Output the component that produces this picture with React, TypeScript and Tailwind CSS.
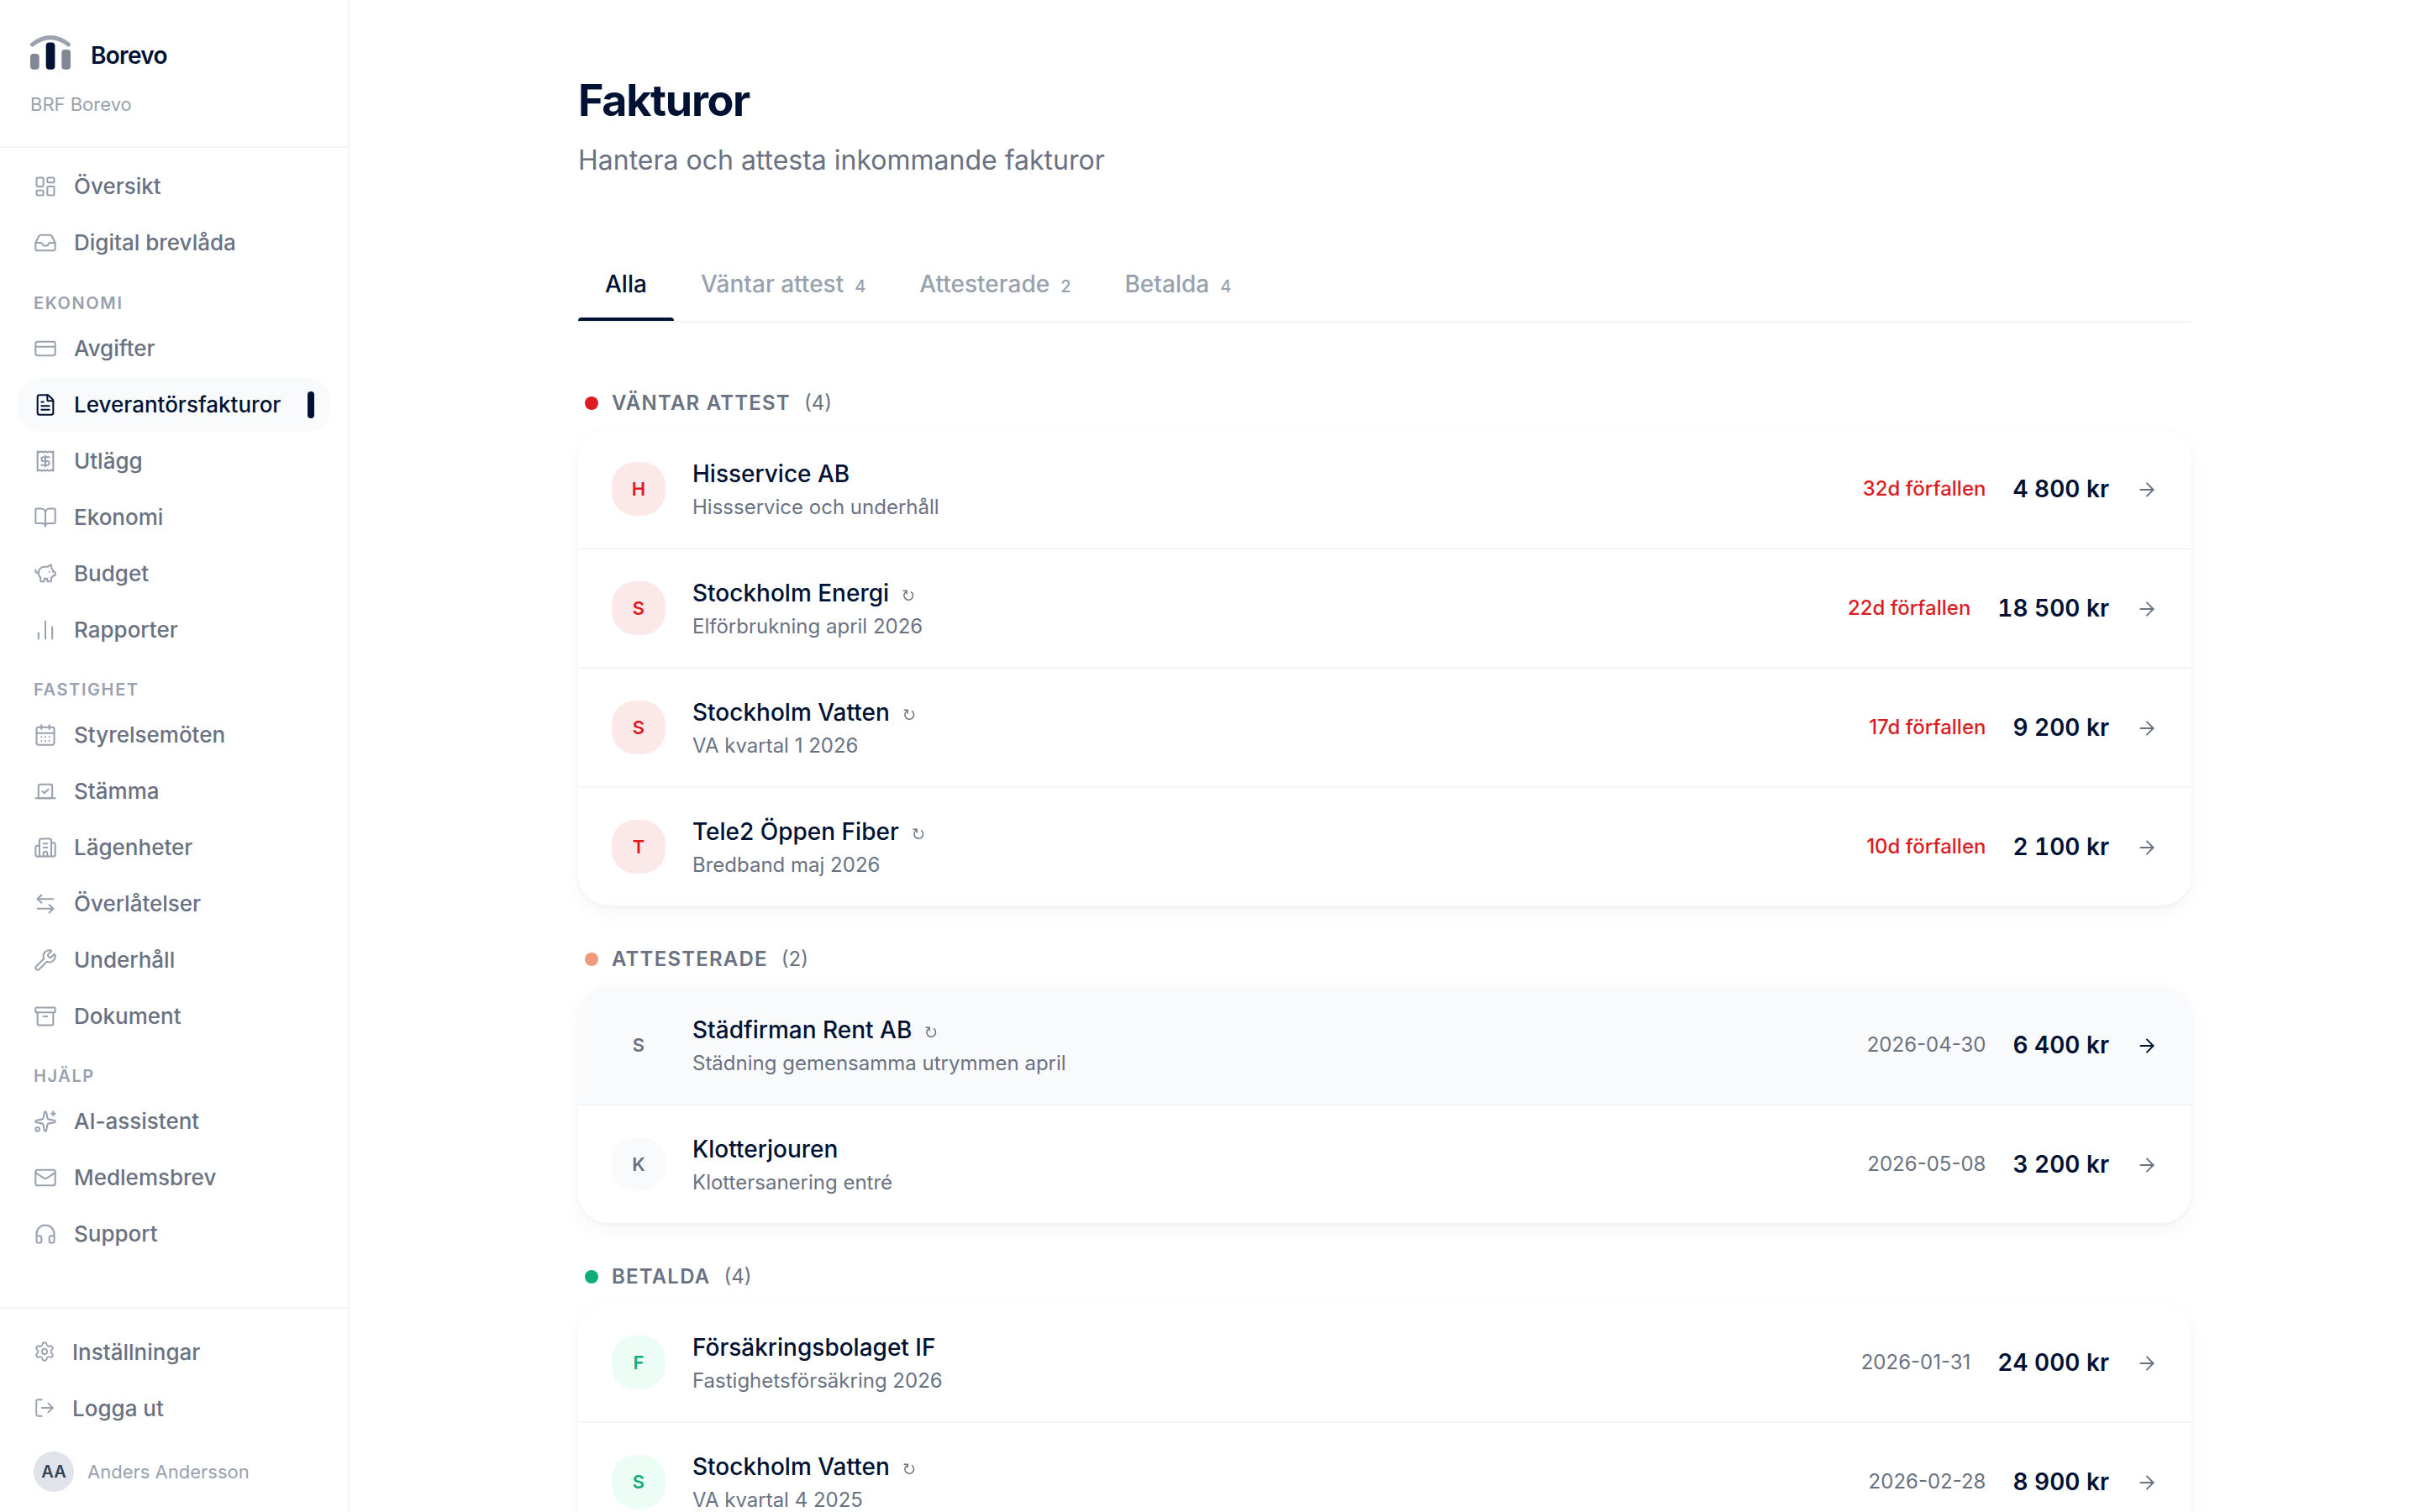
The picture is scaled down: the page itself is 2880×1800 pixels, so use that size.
import type { ReactNode } from 'react';
import {
  Archive,
  ArrowLeftRight,
  ArrowRight,
  BookOpen,
  Building2,
  CalendarDays,
  ChartNoAxesColumn,
  CreditCard,
  FileText,
  Headphones,
  Inbox,
  LayoutDashboard,
  LogOut,
  Mail,
  PiggyBank,
  Settings,
  Sparkles,
  Vote,
  Wrench,
} from 'lucide-react';
import type { LucideIcon } from 'lucide-react';
import clsx from 'clsx';

type Status = 'pending' | 'approved' | 'paid';

interface Invoice {
  supplier: string;
  description: string;
  amount: string;
  due: string;
  overdue?: boolean;
  recurring?: boolean;
  highlighted?: boolean;
}

interface NavEntry {
  label: string;
  icon: LucideIcon | typeof ReceiptIcon;
  active?: boolean;
}

function ReceiptIcon({ size = 24, strokeWidth = 2 }: { size?: number | string; strokeWidth?: number | string }) {
  return (
    <svg
      width={size}
      height={size}
      viewBox="0 0 24 24"
      fill="none"
      stroke="currentColor"
      strokeWidth={strokeWidth}
      strokeLinecap="round"
      strokeLinejoin="round"
    >
      <path d="M4 2v20l2-1 2 1 2-1 2 1 2-1 2 1 2-1 2 1V2l-2 1-2-1-2 1-2-1-2 1-2-1-2 1Z" />
      <path d="M16 8h-6a2 2 0 1 0 0 4h4a2 2 0 1 1 0 4H8" />
      <path d="M12 17.5v-11" />
    </svg>
  );
}

const navGroups: { title?: string; items: NavEntry[] }[] = [
  {
    items: [
      { label: 'Översikt', icon: LayoutDashboard },
      { label: 'Digital brevlåda', icon: Inbox },
    ],
  },
  {
    title: 'Ekonomi',
    items: [
      { label: 'Avgifter', icon: CreditCard },
      { label: 'Leverantörsfakturor', icon: FileText, active: true },
      { label: 'Utlägg', icon: ReceiptIcon },
      { label: 'Ekonomi', icon: BookOpen },
      { label: 'Budget', icon: PiggyBank },
      { label: 'Rapporter', icon: ChartNoAxesColumn },
    ],
  },
  {
    title: 'Fastighet',
    items: [
      { label: 'Styrelsemöten', icon: CalendarDays },
      { label: 'Stämma', icon: Vote },
      { label: 'Lägenheter', icon: Building2 },
      { label: 'Överlåtelser', icon: ArrowLeftRight },
      { label: 'Underhåll', icon: Wrench },
      { label: 'Dokument', icon: Archive },
    ],
  },
  {
    title: 'Hjälp',
    items: [
      { label: 'AI-assistent', icon: Sparkles },
      { label: 'Medlemsbrev', icon: Mail },
      { label: 'Support', icon: Headphones },
    ],
  },
];

const tabs: { label: string; count?: number }[] = [
  { label: 'Alla' },
  { label: 'Väntar attest', count: 4 },
  { label: 'Attesterade', count: 2 },
  { label: 'Betalda', count: 4 },
];

const sections: { status: Status; title: string; invoices: Invoice[] }[] = [
  {
    status: 'pending',
    title: 'Väntar attest',
    invoices: [
      { supplier: 'Hisservice AB', description: 'Hissservice och underhåll', amount: '4 800 kr', due: '32d förfallen', overdue: true },
      { supplier: 'Stockholm Energi', description: 'Elförbrukning april 2026', amount: '18 500 kr', due: '22d förfallen', overdue: true, recurring: true },
      { supplier: 'Stockholm Vatten', description: 'VA kvartal 1 2026', amount: '9 200 kr', due: '17d förfallen', overdue: true, recurring: true },
      { supplier: 'Tele2 Öppen Fiber', description: 'Bredband maj 2026', amount: '2 100 kr', due: '10d förfallen', overdue: true, recurring: true },
    ],
  },
  {
    status: 'approved',
    title: 'Attesterade',
    invoices: [
      { supplier: 'Städfirman Rent AB', description: 'Städning gemensamma utrymmen april', amount: '6 400 kr', due: '2026-04-30', recurring: true, highlighted: true },
      { supplier: 'Klotterjouren', description: 'Klottersanering entré', amount: '3 200 kr', due: '2026-05-08' },
    ],
  },
  {
    status: 'paid',
    title: 'Betalda',
    invoices: [
      { supplier: 'Försäkringsbolaget IF', description: 'Fastighetsförsäkring 2026', amount: '24 000 kr', due: '2026-01-31' },
      { supplier: 'Stockholm Vatten', description: 'VA kvartal 4 2025', amount: '8 900 kr', due: '2026-02-28', recurring: true },
    ],
  },
];

// The last group continues below the fold
const groupCount: Record<Status, number> = { pending: 4, approved: 2, paid: 4 };

const dotColor: Record<Status, string> = {
  pending: 'bg-[#dc1c22]',
  approved: 'bg-[#f0997b]',
  paid: 'bg-[#0eae75]',
};

const avatarColor: Record<Status, string> = {
  pending: 'bg-[#fbe8e9] text-[#dc1c22]',
  approved: 'bg-[#f9fafc] text-gray-500',
  paid: 'bg-[#ecfdf5] text-[#0eae75]',
};

function Logo() {
  return (
    <svg width="48" height="42" viewBox="0 0 48 42" fill="none">
      <path d="M2.6 11Q24 -5.6 45.4 11" stroke="#9ca3af" strokeWidth="5.2" strokeLinecap="round" />
      <rect x="0" y="22" width="10.7" height="18.7" rx="4" fill="#808896" />
      <rect x="18.7" y="8.5" width="10.7" height="32.2" rx="4" fill="#001233" />
      <rect x="37.3" y="17" width="10.7" height="23.7" rx="4" fill="#808896" />
    </svg>
  );
}

function RecurringMark() {
  return (
    <svg width="14" height="13" viewBox="0 0 14 13" fill="none" stroke="currentColor" strokeWidth="1.5" className="mt-1 text-gray-500">
      <path d="M10 2.4A5.3 5.3 0 1 1 4.6 2.3" />
      <path d="M0.6 1.2H5.2V5.4" />
    </svg>
  );
}

function NavItem({ label, icon: Icon, active }: NavEntry) {
  return (
    <a
      className={clsx(
        'flex h-16 items-center gap-5 rounded-[28px] px-5 text-[26px] font-medium',
        active ? 'bg-[#f9fafc] text-[#001233]' : 'text-gray-500',
      )}
    >
      <span className={clsx('shrink-0', active ? 'text-[#001233]' : 'text-gray-400')}>
        <Icon size={28} strokeWidth={1.75} />
      </span>
      <span className="flex-1 pb-0.5 whitespace-nowrap">{label}</span>
      {active && <span className="h-8 w-2 rounded-full bg-[#001233]" />}
    </a>
  );
}

function FooterItem({ label, icon }: { label: string; icon: ReactNode }) {
  return (
    <a className="flex h-16 items-center gap-5 px-5 text-[26px] font-medium text-gray-500">
      <span className="text-gray-400">{icon}</span>
      {label}
    </a>
  );
}

function Sidebar() {
  return (
    <aside className="flex w-[416px] shrink-0 flex-col border-r-2 border-gray-100 bg-white">
      <div className="h-44 border-b-2 border-gray-100 px-9 pt-[42px]">
        <div className="flex items-start gap-6">
          <Logo />
          <span className="pt-[7px] text-[28px] leading-[34px] font-semibold tracking-tight text-[#001233]">
            Borevo
          </span>
        </div>
        <p className="mt-[27px] text-[22px] leading-[26px] text-gray-400">BRF Borevo</p>
      </div>

      <nav className="flex flex-col px-5 pt-3.5">
        {navGroups.map((group, i) => (
          <div key={group.title ?? 'main'} className={clsx(i === 0 && 'pb-px')}>
            {group.title && (
              <h2 className="px-5 pt-6 pb-[7px] text-[20px] leading-[30px] font-semibold tracking-[0.08em] text-gray-400 uppercase">
                {group.title}
              </h2>
            )}
            <div className="flex flex-col gap-[3px]">
              {group.items.map((item) => (
                <NavItem key={item.label} {...item} />
              ))}
            </div>
          </div>
        ))}
      </nav>

      <div className="mt-auto border-t-2 border-gray-100 px-5 pt-[19px] pb-6">
        <div className="flex flex-col gap-[3px]">
          <FooterItem label="Inställningar" icon={<Settings size={26} strokeWidth={1.75} />} />
          <FooterItem label="Logga ut" icon={<LogOut size={26} strokeWidth={1.75} />} />
        </div>
        <div className="mt-5 flex items-center gap-4 px-5">
          <div className="flex size-12 items-center justify-center rounded-full bg-[#e0e4e8] text-[20px] font-semibold text-[#334155]">
            AA
          </div>
          <span className="text-[22px] text-gray-400">Anders Andersson</span>
        </div>
      </div>
    </aside>
  );
}

function InvoiceRow({ invoice, status }: { invoice: Invoice; status: Status }) {
  return (
    <div className={clsx('flex h-[142px] items-center px-10 last:h-[140px]', invoice.highlighted && 'bg-[#f9fafc]')}>
      <div
        className={clsx(
          'flex size-16 shrink-0 items-center justify-center rounded-[28px] text-[22px] font-semibold',
          avatarColor[status],
        )}
      >
        {invoice.supplier[0]}
      </div>
      <div className="ml-8 flex-1">
        <div className="flex items-center gap-4">
          <span className="text-[28px] leading-10 font-medium text-[#001233]">{invoice.supplier}</span>
          {invoice.recurring && <RecurringMark />}
        </div>
        <p className="mt-[3px] text-[24px] leading-[33px] text-gray-500">{invoice.description}</p>
      </div>
      <span className={clsx('text-[24px]', invoice.overdue ? 'font-medium text-[#dc1c22]' : 'text-gray-500')}>
        {invoice.due}
      </span>
      <span className="ml-8 text-[28px] font-semibold text-[#001233] tabular-nums">{invoice.amount}</span>
      <ArrowRight
        size={26}
        strokeWidth={1.75}
        className={clsx('mt-0.5 ml-8', invoice.highlighted ? 'text-[#001233]' : 'text-gray-500')}
      />
    </div>
  );
}

export default function App() {
  return (
    <div className="flex h-[1800px] w-[2880px] overflow-hidden bg-white font-[Inter,sans-serif]">
      <Sidebar />
      <main className="flex-1 overflow-hidden">
        <div className="mx-auto w-[1920px] pt-[88px]">
          <h1 className="text-[52px] leading-[63px] font-bold tracking-tight text-[#001233]">Fakturor</h1>
          <p className="mt-4 text-[32px] leading-[47px] text-gray-500">Hantera och attesta inkommande fakturor</p>

          <div className="mt-[78px] flex border-b-2 border-gray-100">
            {tabs.map((tab, i) => (
              <button
                key={tab.label}
                className={clsx(
                  'relative flex h-[90px] items-baseline px-8 pt-[25px] text-[28px] leading-[42px] font-medium',
                  i === 0 ? 'text-[#001233]' : 'text-gray-400',
                )}
              >
                {tab.label}
                {tab.count && <span className="ml-[13px] text-[20px]">{tab.count}</span>}
                {i === 0 && <span className="absolute inset-x-0 bottom-0 h-1 rounded-t-[4px] bg-[#001233]" />}
              </button>
            ))}
          </div>

          <div className="flex flex-col gap-[46px] pt-[78px]">
            {sections.map(({ status, title, invoices }) => (
              <section key={status}>
                <div className="mb-3.5 flex h-9 items-center gap-4 px-2 text-[24px] text-gray-500">
                  <span className={clsx('size-4 rounded-full', dotColor[status])} />
                  <h2 className="font-semibold tracking-wider uppercase">{title}</h2>
                  <span>({groupCount[status]})</span>
                </div>
                <div className="divide-y-2 divide-gray-100 overflow-hidden rounded-[36px] bg-white shadow-[0_2px_4px_rgba(0,18,51,0.04),0_8px_24px_rgba(0,18,51,0.04)]">
                  {invoices.map((invoice) => (
                    <InvoiceRow key={invoice.supplier} invoice={invoice} status={status} />
                  ))}
                </div>
              </section>
            ))}
          </div>
        </div>
      </main>
    </div>
  );
}
